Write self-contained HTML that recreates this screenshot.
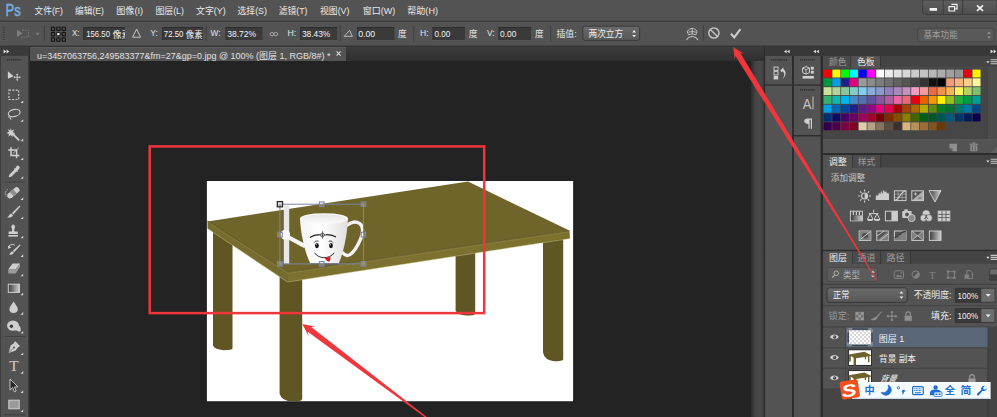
<!DOCTYPE html>
<html lang="zh-CN"><head><meta charset="utf-8"><title>Photoshop</title>
<style>html,body{margin:0;padding:0;background:#535353;overflow:hidden}svg{display:block}text{font-family:"Liberation Sans","Noto Sans CJK SC",sans-serif;white-space:pre}</style>
</head><body>
<svg width="997" height="417" viewBox="0 0 997 417">
<defs>
<linearGradient id="vs" x1="0" x2="1" y1="0" y2="0"><stop offset="0" stop-color="#2c2c2c"/><stop offset="0.35" stop-color="#444"/><stop offset="0.7" stop-color="#484848"/><stop offset="1" stop-color="#3c3c3c"/></linearGradient>
<linearGradient id="strip" x1="0" x2="0" y1="0" y2="1"><stop offset="0" stop-color="#3c3c3c"/><stop offset="1" stop-color="#2f2f2f"/></linearGradient>
<linearGradient id="btn" x1="0" x2="0" y1="0" y2="1"><stop offset="0" stop-color="#6a6a6a"/><stop offset="1" stop-color="#575757"/></linearGradient>
<linearGradient id="btn2" x1="0" x2="0" y1="0" y2="1"><stop offset="0" stop-color="#5e5e5e"/><stop offset="1" stop-color="#4e4e4e"/></linearGradient>
<linearGradient id="cup" x1="0" x2="1" y1="0" y2="0"><stop offset="0" stop-color="#f4f4f4"/><stop offset="0.45" stop-color="#ffffff"/><stop offset="1" stop-color="#dedede"/></linearGradient>
<linearGradient id="cupin" x1="0" x2="0" y1="0" y2="1"><stop offset="0" stop-color="#e6e6e6"/><stop offset="1" stop-color="#fbfbfb"/></linearGradient>
<linearGradient id="ico" x1="0" x2="0" y1="0" y2="1"><stop offset="0" stop-color="#d6d6d6"/><stop offset="1" stop-color="#a8a8a8"/></linearGradient>
<linearGradient id="gr" x1="0" x2="1" y1="0" y2="0"><stop offset="0" stop-color="#3a3a3a"/><stop offset="1" stop-color="#d0d0d0"/></linearGradient>
<pattern id="chk" width="4" height="4" patternUnits="userSpaceOnUse"><rect width="4" height="4" fill="#fff"/><rect width="2" height="2" fill="#d6d6d6"/><rect x="2" y="2" width="2" height="2" fill="#d6d6d6"/></pattern>
<clipPath id="cx"><rect x="83" y="27" width="42" height="13"/></clipPath>
<clipPath id="cwhite"><rect x="206.9" y="181" width="366.3" height="220.3"/></clipPath>
<clipPath id="crow3"><rect x="823" y="368" width="165" height="21"/></clipPath>
</defs>
<rect x="0.00" y="0.00" width="997.00" height="417.00" fill="#535353" />
<rect x="0.00" y="0.00" width="997.00" height="21.00" fill="#535353" />
<rect x="0.00" y="20.60" width="997.00" height="1.40" fill="#3b3b3b" />
<rect x="0.00" y="22.00" width="997.00" height="0.80" fill="#5c5c5c" />
<rect x="0.00" y="45.60" width="997.00" height="1.40" fill="#353535" />
<rect x="28.40" y="47.00" width="736.60" height="370.00" fill="#2b2b2b" />
<rect x="30.00" y="47.00" width="734.00" height="14.00" fill="url(#strip)" />
<rect x="30.00" y="61.00" width="721.00" height="356.00" fill="#232323" />
<rect x="751.00" y="61.00" width="13.00" height="356.00" fill="url(#vs)" />
<rect x="764.00" y="47.00" width="1.20" height="370.00" fill="#2a2a2a" />
<rect x="30.00" y="47.00" width="316.00" height="14.00" fill="#535353" />
<rect x="30.00" y="47.00" width="316.00" height="0.80" fill="#606060" />
<text x="36.90" y="58.90" font-size="9.4" fill="#e2e2e2" textLength="293.50" lengthAdjust="spacingAndGlyphs" >u=3457063756,249583377&amp;fm=27&amp;gp=0.jpg @ 100% (图层 1, RGB/8#) *</text>
<path d="M336.6 51.4l4 4.2M340.6 51.4l-4 4.2" stroke="#d8d8d8" stroke-width="1.1" fill="none"/>
<rect x="0.00" y="47.00" width="28.00" height="370.00" fill="#535353" />
<rect x="0.00" y="47.00" width="28.00" height="8.80" fill="#3a3a3a" />
<rect x="0.00" y="47.00" width="1.00" height="370.00" fill="#3e3e3e" />
<path d="M3.6 49.6l2.6 2-2.6 2zM6.6 49.6l2.6 2-2.6 2z" fill="#e6e6e6"/>
<rect x="7.0" y="58.9" width="1.1" height="1.7" fill="#303030"/><rect x="8.9" y="58.9" width="1.1" height="1.7" fill="#303030"/><rect x="10.8" y="58.9" width="1.1" height="1.7" fill="#303030"/><rect x="12.7" y="58.9" width="1.1" height="1.7" fill="#303030"/><rect x="14.6" y="58.9" width="1.1" height="1.7" fill="#303030"/><rect x="16.5" y="58.9" width="1.1" height="1.7" fill="#303030"/><rect x="18.4" y="58.9" width="1.1" height="1.7" fill="#303030"/><rect x="20.3" y="58.9" width="1.1" height="1.7" fill="#303030"/>
<rect x="765.20" y="47.00" width="231.80" height="8.80" fill="#383838" />
<rect x="765.20" y="55.80" width="231.80" height="361.20" fill="#2d2d2d" />
<path d="M786.6 49.7l-2.6 1.8 2.6 1.8zM789.6 49.7l-2.6 1.8 2.6 1.8z" fill="#e0e0e0"/>
<path d="M815.9 49.7l-2.6 1.8 2.6 1.8zM818.9 49.7l-2.6 1.8 2.6 1.8z" fill="#e0e0e0"/>
<path d="M990.6 49.6l2.6 2-2.6 2zM993.6 49.6l2.6 2-2.6 2z" fill="#e0e0e0"/>
<rect x="765.20" y="56.00" width="26.80" height="28.40" fill="#535353" />
<rect x="765.20" y="85.70" width="26.80" height="331.30" fill="#535353" />
<rect x="770.8" y="59" width="1.1" height="1.7" fill="#303030"/><rect x="772.7" y="59" width="1.1" height="1.7" fill="#303030"/><rect x="774.6" y="59" width="1.1" height="1.7" fill="#303030"/><rect x="776.5" y="59" width="1.1" height="1.7" fill="#303030"/><rect x="778.4" y="59" width="1.1" height="1.7" fill="#303030"/><rect x="780.3" y="59" width="1.1" height="1.7" fill="#303030"/><rect x="782.2" y="59" width="1.1" height="1.7" fill="#303030"/><rect x="784.1" y="59" width="1.1" height="1.7" fill="#303030"/><rect x="786.0" y="59" width="1.1" height="1.7" fill="#303030"/>
<rect x="794.00" y="56.00" width="26.60" height="28.40" fill="#535353" />
<rect x="794.00" y="85.70" width="26.60" height="49.30" fill="#535353" />
<rect x="794.00" y="136.40" width="26.60" height="280.60" fill="#535353" />
<rect x="800.2" y="59" width="1.1" height="1.7" fill="#303030"/><rect x="802.1" y="59" width="1.1" height="1.7" fill="#303030"/><rect x="804.0" y="59" width="1.1" height="1.7" fill="#303030"/><rect x="805.9" y="59" width="1.1" height="1.7" fill="#303030"/><rect x="807.8" y="59" width="1.1" height="1.7" fill="#303030"/><rect x="809.7" y="59" width="1.1" height="1.7" fill="#303030"/><rect x="811.6" y="59" width="1.1" height="1.7" fill="#303030"/><rect x="813.5" y="59" width="1.1" height="1.7" fill="#303030"/><rect x="800.2" y="89" width="1.1" height="1.7" fill="#303030"/><rect x="802.1" y="89" width="1.1" height="1.7" fill="#303030"/><rect x="804.0" y="89" width="1.1" height="1.7" fill="#303030"/><rect x="805.9" y="89" width="1.1" height="1.7" fill="#303030"/><rect x="807.8" y="89" width="1.1" height="1.7" fill="#303030"/><rect x="809.7" y="89" width="1.1" height="1.7" fill="#303030"/><rect x="811.6" y="89" width="1.1" height="1.7" fill="#303030"/><rect x="813.5" y="89" width="1.1" height="1.7" fill="#303030"/>
<g fill="#d0d0d0"><rect x="774" y="67" width="4" height="3.4" fill="none" stroke="#d0d0d0" stroke-width="0.9"/><rect x="774" y="71.6" width="4" height="3.4" fill="none" stroke="#d0d0d0" stroke-width="0.9"/><rect x="773.6" y="76" width="4.6" height="3.4"/><path d="M780.2 70.6l3-3 0.4 1.6c2.6 1.4 3 6.6-1 9.6 2.4-3.2 2-6.4-0.2-7.6l-0.4 1.2z"/></g>
<g fill="#d0d0d0"><path d="M806 66.6l3.4 1.4v4.6l-3.4 1.6-3.4-1.6v-4.6z" fill="none" stroke="#d0d0d0" stroke-width="1"/><path d="M802.8 68.2l3.2 1.4 3.2-1.4M806 69.6v4.4" fill="none" stroke="#d0d0d0" stroke-width="0.8"/><rect x="810.8" y="66.8" width="3" height="2.8"/><rect x="810.8" y="70.8" width="3" height="2.8"/><rect x="802.6" y="76" width="11.2" height="2.6"/></g>
<text x="802.80" y="108.70" font-size="14.6" fill="#c4c4c4" textLength="8.60" lengthAdjust="spacingAndGlyphs" >A</text>
<path d="M813 96.400v13" stroke="#c4c4c4" stroke-width="1"/>
<path d="M807.6 118.6h4.4v10.2h-1.2v-9h-1.2v9h-1.2v-4.8c-5.4 0-5.4-5.4-0.8-5.4z" fill="#cfcfcf"/>
<rect x="823.00" y="56.00" width="174.00" height="361.00" fill="#535353" />
<rect x="823.00" y="56.00" width="174.00" height="11.40" fill="#444444" />
<rect x="823.00" y="56.00" width="28.00" height="11.40" fill="#4b4b4b" />
<rect x="850.40" y="56.00" width="0.80" height="11.40" fill="#333" />
<rect x="851.20" y="56.00" width="28.80" height="12.00" fill="#535353" />
<rect x="880.00" y="56.00" width="0.80" height="11.40" fill="#333" />
<text x="829.00" y="65.30" font-size="8.9" fill="#9b9b9b" textLength="17.40" lengthAdjust="spacingAndGlyphs" >颜色</text>
<text x="856.90" y="65.30" font-size="8.9" fill="#ececec" textLength="17.80" lengthAdjust="spacingAndGlyphs" >色板</text>
<rect x="823.00" y="68.00" width="164.00" height="71.40" fill="#464646" />
<rect x="987.00" y="68.00" width="10.00" height="71.40" fill="#4c4c4c" />
<rect x="986.60" y="68.00" width="0.80" height="71.40" fill="#3e3e3e" />
<path d="M986.2 61.2h3.4l-1.7 2z" fill="#e0e0e0"/><path d="M990.6 59.800000000000004h6.4M990.6 61.800000000000004h6.4M990.6 63.800000000000004h6.4" stroke="#c8c8c8" stroke-width="1.1"/>
<rect x="823.60" y="69.60" width="8.00" height="7.90" fill="#ff0000" />
<rect x="832.36" y="69.60" width="8.00" height="7.90" fill="#ffff00" />
<rect x="841.12" y="69.60" width="8.00" height="7.90" fill="#00ff00" />
<rect x="849.88" y="69.60" width="8.00" height="7.90" fill="#00ffff" />
<rect x="858.64" y="69.60" width="8.00" height="7.90" fill="#0000ff" />
<rect x="867.40" y="69.60" width="8.00" height="7.90" fill="#ff00ff" />
<rect x="876.16" y="69.60" width="8.00" height="7.90" fill="#ffffff" />
<rect x="884.92" y="69.60" width="8.00" height="7.90" fill="#ebebeb" />
<rect x="893.68" y="69.60" width="8.00" height="7.90" fill="#e1e1e1" />
<rect x="902.44" y="69.60" width="8.00" height="7.90" fill="#d7d7d7" />
<rect x="911.20" y="69.60" width="8.00" height="7.90" fill="#cccccc" />
<rect x="919.96" y="69.60" width="8.00" height="7.90" fill="#c2c2c2" />
<rect x="928.72" y="69.60" width="8.00" height="7.90" fill="#b7b7b7" />
<rect x="937.48" y="69.60" width="8.00" height="7.90" fill="#acacac" />
<rect x="946.24" y="69.60" width="8.00" height="7.90" fill="#a1a1a1" />
<rect x="955.00" y="69.60" width="8.00" height="7.90" fill="#959595" />
<rect x="963.76" y="69.60" width="8.00" height="7.90" fill="#e60012" />
<rect x="972.52" y="69.60" width="8.00" height="7.90" fill="#fff100" />
<rect x="823.60" y="78.39" width="8.00" height="7.90" fill="#009944" />
<rect x="832.36" y="78.39" width="8.00" height="7.90" fill="#00a0e9" />
<rect x="841.12" y="78.39" width="8.00" height="7.90" fill="#1d2088" />
<rect x="849.88" y="78.39" width="8.00" height="7.90" fill="#e4007f" />
<rect x="858.64" y="78.39" width="8.00" height="7.90" fill="#9a9a9a" />
<rect x="867.40" y="78.39" width="8.00" height="7.90" fill="#8b8b8b" />
<rect x="876.16" y="78.39" width="8.00" height="7.90" fill="#7d7d7d" />
<rect x="884.92" y="78.39" width="8.00" height="7.90" fill="#707070" />
<rect x="893.68" y="78.39" width="8.00" height="7.90" fill="#626262" />
<rect x="902.44" y="78.39" width="8.00" height="7.90" fill="#555555" />
<rect x="911.20" y="78.39" width="8.00" height="7.90" fill="#464646" />
<rect x="919.96" y="78.39" width="8.00" height="7.90" fill="#343434" />
<rect x="928.72" y="78.39" width="8.00" height="7.90" fill="#111111" />
<rect x="937.48" y="78.39" width="8.00" height="7.90" fill="#000000" />
<rect x="946.24" y="78.39" width="8.00" height="7.90" fill="#f29b76" />
<rect x="955.00" y="78.39" width="8.00" height="7.90" fill="#f6b37f" />
<rect x="963.76" y="78.39" width="8.00" height="7.90" fill="#facd89" />
<rect x="972.52" y="78.39" width="8.00" height="7.90" fill="#fff799" />
<rect x="823.60" y="87.18" width="8.00" height="7.90" fill="#cce198" />
<rect x="832.36" y="87.18" width="8.00" height="7.90" fill="#acd598" />
<rect x="841.12" y="87.18" width="8.00" height="7.90" fill="#89c997" />
<rect x="849.88" y="87.18" width="8.00" height="7.90" fill="#84ccc9" />
<rect x="858.64" y="87.18" width="8.00" height="7.90" fill="#7ecef4" />
<rect x="867.40" y="87.18" width="8.00" height="7.90" fill="#88abda" />
<rect x="876.16" y="87.18" width="8.00" height="7.90" fill="#8c97cb" />
<rect x="884.92" y="87.18" width="8.00" height="7.90" fill="#8f82bc" />
<rect x="893.68" y="87.18" width="8.00" height="7.90" fill="#aa89bd" />
<rect x="902.44" y="87.18" width="8.00" height="7.90" fill="#c490bf" />
<rect x="911.20" y="87.18" width="8.00" height="7.90" fill="#f19ec2" />
<rect x="919.96" y="87.18" width="8.00" height="7.90" fill="#f29c9f" />
<rect x="928.72" y="87.18" width="8.00" height="7.90" fill="#ec6941" />
<rect x="937.48" y="87.18" width="8.00" height="7.90" fill="#f19149" />
<rect x="946.24" y="87.18" width="8.00" height="7.90" fill="#f8b551" />
<rect x="955.00" y="87.18" width="8.00" height="7.90" fill="#fff45c" />
<rect x="963.76" y="87.18" width="8.00" height="7.90" fill="#b3d465" />
<rect x="972.52" y="87.18" width="8.00" height="7.90" fill="#80c269" />
<rect x="823.60" y="95.97" width="8.00" height="7.90" fill="#32b16c" />
<rect x="832.36" y="95.97" width="8.00" height="7.90" fill="#13b5b1" />
<rect x="841.12" y="95.97" width="8.00" height="7.90" fill="#00b7ee" />
<rect x="849.88" y="95.97" width="8.00" height="7.90" fill="#448aca" />
<rect x="858.64" y="95.97" width="8.00" height="7.90" fill="#556fb5" />
<rect x="867.40" y="95.97" width="8.00" height="7.90" fill="#5f52a0" />
<rect x="876.16" y="95.97" width="8.00" height="7.90" fill="#8957a1" />
<rect x="884.92" y="95.97" width="8.00" height="7.90" fill="#ae5da1" />
<rect x="893.68" y="95.97" width="8.00" height="7.90" fill="#ea68a2" />
<rect x="902.44" y="95.97" width="8.00" height="7.90" fill="#eb6877" />
<rect x="911.20" y="95.97" width="8.00" height="7.90" fill="#e60012" />
<rect x="919.96" y="95.97" width="8.00" height="7.90" fill="#eb6100" />
<rect x="928.72" y="95.97" width="8.00" height="7.90" fill="#f39800" />
<rect x="937.48" y="95.97" width="8.00" height="7.90" fill="#fff100" />
<rect x="946.24" y="95.97" width="8.00" height="7.90" fill="#8fc31f" />
<rect x="955.00" y="95.97" width="8.00" height="7.90" fill="#22ac38" />
<rect x="963.76" y="95.97" width="8.00" height="7.90" fill="#009944" />
<rect x="972.52" y="95.97" width="8.00" height="7.90" fill="#009e96" />
<rect x="823.60" y="104.76" width="8.00" height="7.90" fill="#00a0e9" />
<rect x="832.36" y="104.76" width="8.00" height="7.90" fill="#0068b7" />
<rect x="841.12" y="104.76" width="8.00" height="7.90" fill="#00479d" />
<rect x="849.88" y="104.76" width="8.00" height="7.90" fill="#1d2088" />
<rect x="858.64" y="104.76" width="8.00" height="7.90" fill="#601986" />
<rect x="867.40" y="104.76" width="8.00" height="7.90" fill="#920783" />
<rect x="876.16" y="104.76" width="8.00" height="7.90" fill="#e4007f" />
<rect x="884.92" y="104.76" width="8.00" height="7.90" fill="#e5004f" />
<rect x="893.68" y="104.76" width="8.00" height="7.90" fill="#a40000" />
<rect x="902.44" y="104.76" width="8.00" height="7.90" fill="#a84200" />
<rect x="911.20" y="104.76" width="8.00" height="7.90" fill="#ac6a00" />
<rect x="919.96" y="104.76" width="8.00" height="7.90" fill="#b7aa00" />
<rect x="928.72" y="104.76" width="8.00" height="7.90" fill="#638c0b" />
<rect x="937.48" y="104.76" width="8.00" height="7.90" fill="#097c25" />
<rect x="946.24" y="104.76" width="8.00" height="7.90" fill="#007130" />
<rect x="955.00" y="104.76" width="8.00" height="7.90" fill="#00736d" />
<rect x="963.76" y="104.76" width="8.00" height="7.90" fill="#0075a9" />
<rect x="972.52" y="104.76" width="8.00" height="7.90" fill="#004986" />
<rect x="823.60" y="113.55" width="8.00" height="7.90" fill="#002e73" />
<rect x="832.36" y="113.55" width="8.00" height="7.90" fill="#100964" />
<rect x="841.12" y="113.55" width="8.00" height="7.90" fill="#440062" />
<rect x="849.88" y="113.55" width="8.00" height="7.90" fill="#6a005f" />
<rect x="858.64" y="113.55" width="8.00" height="7.90" fill="#a4005b" />
<rect x="867.40" y="113.55" width="8.00" height="7.90" fill="#a4002d" />
<rect x="876.16" y="113.55" width="8.00" height="7.90" fill="#7d0000" />
<rect x="884.92" y="113.55" width="8.00" height="7.90" fill="#7f2d00" />
<rect x="893.68" y="113.55" width="8.00" height="7.90" fill="#834e00" />
<rect x="902.44" y="113.55" width="8.00" height="7.90" fill="#8a8000" />
<rect x="911.20" y="113.55" width="8.00" height="7.90" fill="#3f6600" />
<rect x="919.96" y="113.55" width="8.00" height="7.90" fill="#005e15" />
<rect x="928.72" y="113.55" width="8.00" height="7.90" fill="#005826" />
<rect x="937.48" y="113.55" width="8.00" height="7.90" fill="#005752" />
<rect x="946.24" y="113.55" width="8.00" height="7.90" fill="#00597c" />
<rect x="955.00" y="113.55" width="8.00" height="7.90" fill="#003567" />
<rect x="963.76" y="113.55" width="8.00" height="7.90" fill="#001c58" />
<rect x="972.52" y="113.55" width="8.00" height="7.90" fill="#0b004e" />
<rect x="823.60" y="122.34" width="8.00" height="7.90" fill="#32004b" />
<rect x="832.36" y="122.34" width="8.00" height="7.90" fill="#50004a" />
<rect x="841.12" y="122.34" width="8.00" height="7.90" fill="#800046" />
<rect x="849.88" y="122.34" width="8.00" height="7.90" fill="#80001f" />
<rect x="858.64" y="122.34" width="8.00" height="7.90" fill="#e0cdae" />
<rect x="867.40" y="122.34" width="8.00" height="7.90" fill="#b5a18a" />
<rect x="876.16" y="122.34" width="8.00" height="7.90" fill="#86725f" />
<rect x="884.92" y="122.34" width="8.00" height="7.90" fill="#5e4d41" />
<rect x="893.68" y="122.34" width="8.00" height="7.90" fill="#3a302d" />
<rect x="902.44" y="122.34" width="8.00" height="7.90" fill="#d9b27c" />
<rect x="911.20" y="122.34" width="8.00" height="7.90" fill="#b98f5c" />
<rect x="919.96" y="122.34" width="8.00" height="7.90" fill="#9c6c38" />
<rect x="928.72" y="122.34" width="8.00" height="7.90" fill="#845320" />
<rect x="937.48" y="122.34" width="8.00" height="7.90" fill="#6a3a0a" />
<rect x="823.00" y="139.40" width="174.00" height="0.80" fill="#5e5e5e" />
<rect x="823.00" y="153.00" width="174.00" height="2.00" fill="#2d2d2d" />
<path d="M949.4 143.8h7.6v7.4h-4.4l-3.2-3.2z" fill="#8e8e8e"/><path d="M949.4 148l3.2 3.2v-3.2z" fill="#6a6a6a"/>
<g fill="#8a8a8a"><rect x="970.2" y="145.2" width="7.2" height="6" rx="0.8"/><rect x="969.4" y="143.6" width="8.8" height="1.2"/><rect x="972.4" y="142.4" width="2.8" height="1.2"/></g><path d="M972.4 146.4v4M975.2 146.4v4" stroke="#535353" stroke-width="0.8"/>
<path d="M997 146.6l-6.4 6.4h6.4z" fill="#626262"/>
<rect x="823.00" y="155.00" width="174.00" height="12.40" fill="#444444" />
<rect x="823.00" y="155.00" width="29.00" height="13.00" fill="#535353" />
<rect x="852.00" y="155.00" width="0.80" height="12.40" fill="#333" />
<rect x="852.80" y="155.00" width="27.60" height="12.40" fill="#4b4b4b" />
<rect x="880.40" y="155.00" width="0.80" height="12.40" fill="#333" />
<text x="828.80" y="164.90" font-size="8.9" fill="#ececec" textLength="18.00" lengthAdjust="spacingAndGlyphs" >调整</text>
<text x="857.70" y="164.90" font-size="8.9" fill="#9b9b9b" textLength="17.40" lengthAdjust="spacingAndGlyphs" >样式</text>
<path d="M986.2 160.6h3.4l-1.7 2z" fill="#e0e0e0"/><path d="M990.6 159.2h6.4M990.6 161.2h6.4M990.6 163.2h6.4" stroke="#c8c8c8" stroke-width="1.1"/>
<text x="830.80" y="181.20" font-size="8.6" fill="#c4c4c4" textLength="34.40" lengthAdjust="spacingAndGlyphs" >添加调整</text>
<rect x="823.00" y="249.80" width="174.00" height="1.60" fill="#2d2d2d" />
<circle cx="864.6" cy="196" r="3" fill="none" stroke="#cdcdcd" stroke-width="1.1"/><path d="M864.6 193a3 3 0 0 1 0 6z" fill="#cdcdcd"/>
<path d="M869.00 196.00L871.00 196.00M867.71 199.11L869.13 200.53M864.60 200.40L864.60 202.40M861.49 199.11L860.07 200.53M860.20 196.00L858.20 196.00M861.49 192.89L860.07 191.47M864.60 191.60L864.60 189.60M867.71 192.89L869.13 191.47" stroke="#cdcdcd" stroke-width="1.1"/>
<path d="M875.8 200v-4l1.2-1 1 1 1-3.4 1.2 2 1-4 1.2 3.4 1.2-4.4 1.2 3 1.2-1.6 1 2.6 1.2-1.2 0.8 2v5.6z" fill="#cdcdcd"/>
<rect x="894.4" y="190.8" width="11.6" height="9.8" fill="none" stroke="#cdcdcd" stroke-width="1"/>
<path d="M894.4 194h11.6M894.4 197.4h11.6M898.2 190.8v9.8M902.2 190.8v9.8" stroke="#cdcdcd" stroke-width="0.5"/><path d="M894.6 200.4c5 0 5.6-9.4 11.2-9.4" stroke="#cdcdcd" stroke-width="1.1" fill="none"/>
<rect x="911.8" y="190.8" width="11.6" height="9.8" fill="none" stroke="#cdcdcd" stroke-width="1"/>
<path d="M923.4 190.8l-11.6 9.8h11.6z" fill="#cdcdcd" opacity="0.75"/><path d="M914 194h3M915.5 192.5v3" stroke="#cdcdcd" stroke-width="0.9"/><path d="M918.4 198h3" stroke="#535353" stroke-width="0.9"/>
<path d="M929 190.6h12l-6 11.4z" fill="url(#gr)" stroke="#cdcdcd" stroke-width="1"/>
<rect x="850.4" y="211.2" width="12" height="9.6" fill="none" stroke="#cdcdcd" stroke-width="1"/>
<rect x="850.9" y="215.4" width="11" height="5" fill="url(#gr)"/><path d="M853.4 211.4v3.6M856.4 211.4v3.6M859.4 211.4v3.6" stroke="#cdcdcd" stroke-width="1.2"/>
<g stroke="#cdcdcd" fill="none" stroke-width="1"><path d="M873.6 209.8v3M868.8 213.6h9.6M870.2 213.6l-2.6 5.4M870.2 213.6l2.6 5.4M877 213.6l-2.6 5.4M877 213.6l2.6 5.4"/></g><path d="M867 219h6.4a3.2 2 0 0 1-6.4 0zM873.8 219h6.4a3.2 2 0 0 1-6.4 0z" fill="#cdcdcd"/>
<rect x="885.4" y="211.2" width="12" height="9.6" fill="none" stroke="#cdcdcd" stroke-width="1"/>
<rect x="891.4" y="211.2" width="6" height="9.6" fill="#cdcdcd"/>
<g fill="#cdcdcd"><rect x="902.2" y="211" width="9.4" height="7" rx="1"/><rect x="904.4" y="209.4" width="3.4" height="2"/></g><circle cx="907" cy="214.4" r="2" fill="#535353"/><circle cx="911.6" cy="218" r="3.6" fill="#8a8a8a" stroke="#cdcdcd" stroke-width="0.9"/>
<circle cx="926.2" cy="213.8" r="3.6" fill="#cdcdcd"/><circle cx="923.6" cy="218" r="3.4" fill="#cdcdcd" stroke="#535353" stroke-width="0.6"/><circle cx="928.9" cy="218" r="3.4" fill="#cdcdcd" stroke="#535353" stroke-width="0.6"/><path d="M926.2 217.2l0 -2.6M926.2 217.2l-2 1.6M926.2 217.2l2 1.6" stroke="#535353" stroke-width="1"/>
<rect x="938.2" y="211.2" width="11.6" height="9.6" fill="#cdcdcd" stroke="#cdcdcd" stroke-width="1"/>
<path d="M938.2 214.4h11.6M938.2 217.6h11.6M942 211.2v9.6M946 211.2v9.6" stroke="#535353" stroke-width="0.8"/>
<rect x="859.2" y="231" width="11.6" height="9.4" fill="none" stroke="#cdcdcd" stroke-width="1"/>
<rect x="859.7" y="231.5" width="10.6" height="8.4" fill="#808080"/><ellipse cx="865" cy="235.7" rx="3" ry="2.6" fill="#4a4a4a"/><path d="M860.4 239.4l9.4-7.4" stroke="#cdcdcd" stroke-width="1"/>
<rect x="876.8" y="231" width="11.6" height="9.4" fill="none" stroke="#cdcdcd" stroke-width="1"/>
<path d="M876.8 240.4l11.6-9.4v9.4z" fill="#808080"/><path d="M877 236l7-5M880 240.4l8.4-6.6" stroke="#cdcdcd" stroke-width="0.9"/>
<rect x="894.4" y="231" width="11.6" height="9.4" fill="none" stroke="#cdcdcd" stroke-width="1"/>
<path d="M894.4 238l3-1v-2l3-0.8v-1.6l3-1 2.6-0.6v9.4h-11.6z" fill="#808080"/><path d="M894.6 237.6l3-1 0.6-1.6 2.6-0.8 0.4-1.6 3-1 1.6-0.4" stroke="#3a3a3a" stroke-width="1.2" fill="none"/>
<rect x="911.8" y="231" width="11.6" height="9.4" fill="none" stroke="#cdcdcd" stroke-width="1"/>
<path d="M911.8 231l5.8 4.7-5.8 4.7zM923.4 231l-5.8 4.7 5.8 4.7z" fill="#808080"/><path d="M911.8 231l11.6 9.4M923.4 231l-11.6 9.4" stroke="#cdcdcd" stroke-width="0.7"/>
<rect x="929.4" y="231" width="11.6" height="9.4" fill="url(#gr)" stroke="#cdcdcd" stroke-width="1"/>
<rect x="823.00" y="251.40" width="174.00" height="12.40" fill="#444444" />
<rect x="823.00" y="251.40" width="29.00" height="13.00" fill="#535353" />
<rect x="852.00" y="251.40" width="0.80" height="12.40" fill="#333" />
<rect x="852.80" y="251.40" width="27.40" height="12.40" fill="#4b4b4b" />
<rect x="880.20" y="251.40" width="0.80" height="12.40" fill="#333" />
<rect x="881.00" y="251.40" width="29.00" height="12.40" fill="#4b4b4b" />
<rect x="910.00" y="251.40" width="0.80" height="12.40" fill="#333" />
<text x="829.00" y="261.20" font-size="8.9" fill="#ececec" textLength="18.00" lengthAdjust="spacingAndGlyphs" >图层</text>
<text x="857.50" y="261.20" font-size="8.9" fill="#9b9b9b" textLength="17.80" lengthAdjust="spacingAndGlyphs" >通道</text>
<text x="886.50" y="261.20" font-size="8.9" fill="#9b9b9b" textLength="18.20" lengthAdjust="spacingAndGlyphs" >路径</text>
<path d="M986.2 256.8h3.4l-1.7 2z" fill="#e0e0e0"/><path d="M990.6 255.4h6.4M990.6 257.40000000000003h6.4M990.6 259.40000000000003h6.4" stroke="#c8c8c8" stroke-width="1.1"/>
<rect x="827" y="267.4" width="50.6" height="14" rx="2.4" fill="#5b5b5b" stroke="#474747" stroke-width="0.9"/>
<circle cx="836.2" cy="273.2" r="2.3" fill="none" stroke="#b0b0b0" stroke-width="1"/><path d="M834.6 275l-2.4 2.6" stroke="#b0b0b0" stroke-width="1.1"/>
<text x="843.00" y="277.60" font-size="8.8" fill="#b4b4b4" textLength="16.80" lengthAdjust="spacingAndGlyphs" >类型</text>
<path d="M871 272.8l1.9-2.2 1.9 2.2zM871 275.4l1.9 2.2 1.9-2.2z" fill="#cfcfcf"/>
<rect x="894.2" y="270.8" width="9.2" height="7.6" rx="0.8" fill="none" stroke="#828282" stroke-width="1"/><path d="M895.6 277l2.2-2.6 1.6 1.6 1.2-1 1.6 2z" fill="#828282"/><circle cx="901.2" cy="272.8" r="0.8" fill="#828282"/>
<circle cx="915.8" cy="274.6" r="3.7" fill="none" stroke="#828282" stroke-width="1"/><path d="M913.2 277.2a3.7 3.7 0 0 0 5.2-5.2z" fill="#828282"/>
<text x="929.20" y="278.60" font-size="10.5" fill="#828282" style='font-family:"Liberation Serif",serif' >T</text>
<rect x="948" y="271.6" width="6.4" height="6.2" fill="none" stroke="#828282" stroke-width="1"/><g fill="#828282"><rect x="946.8" y="270.4" width="2.2" height="2.2"/><rect x="953.4" y="270.4" width="2.2" height="2.2"/><rect x="946.8" y="276.8" width="2.2" height="2.2"/><rect x="953.4" y="276.8" width="2.2" height="2.2"/></g>
<path d="M966.8 270.6h3.4l2.2 2.2v5.8h-5.6z" fill="none" stroke="#828282" stroke-width="1"/><rect x="964.6" y="274.4" width="4.4" height="4.4" fill="#828282"/>
<rect x="989.6" y="268.8" width="7.4" height="11.8" rx="1" fill="#3f3f3f" stroke="#3a3a3a" stroke-width="0.6"/><rect x="990.2" y="269.4" width="6.8" height="5" fill="#6a6a6a"/>
<rect x="823.00" y="283.80" width="174.00" height="1.20" fill="#424242" />
<rect x="827" y="287.8" width="80.2" height="14.6" rx="2.4" fill="url(#btn)" stroke="#333" stroke-width="0.9"/>
<text x="833.00" y="298.20" font-size="8.8" fill="#f0f0f0" textLength="16.40" lengthAdjust="spacingAndGlyphs" >正常</text>
<path d="M899.4 293.6l2-2.4 2 2.4zM899.4 296.4l2 2.4 2-2.4z" fill="#e6e6e6"/>
<text x="913.80" y="298.30" font-size="8.7" fill="#ededed" textLength="37.60" lengthAdjust="spacingAndGlyphs" >不透明度:</text>
<rect x="955.20" y="288.20" width="26.20" height="14.00" fill="#3a3a3a" />
<rect x="981.40" y="288.20" width="13.60" height="14.00" fill="#6c6c6c" />
<rect x="955.20" y="288.20" width="39.80" height="14.00" fill="none" stroke="#333" stroke-width="0.8"/>
<text x="957.60" y="299.00" font-size="9" fill="#f0f0f0" textLength="20.60" lengthAdjust="spacingAndGlyphs" >100%</text>
<path d="M985.6 294l2.6 2.8 2.6-2.8z" fill="#ededed"/>
<rect x="823.00" y="305.20" width="174.00" height="1.00" fill="#444" />
<text x="828.50" y="318.60" font-size="8.7" fill="#9a9a9a" textLength="20.80" lengthAdjust="spacingAndGlyphs" >锁定:</text>
<rect x="855.8" y="312.2" width="7.8" height="7.8" fill="#6e6e6e" stroke="#8e8e8e" stroke-width="0.8"/><path d="M855.8 312.2h2.6v2.6h-2.6zM861 312.2h2.6v2.6h-2.6zM858.4 314.8h2.6v2.6h-2.6zM855.8 317.4h2.6v2.6h-2.6zM861 317.4h2.6v2.6h-2.6z" fill="#9a9a9a"/>
<path d="M881.8 311.6l-6.6 6.2 1 1zM875.6 317.4c-1.4 0-2.2 1.6-4.6 2 2 1.2 5.4 0.6 5.6-1z" fill="#8e8e8e" stroke="#8e8e8e" stroke-width="0.6"/>
<path d="M891.9 311.6v9.2M887.3 316.2h9.2" stroke="#8e8e8e" stroke-width="1"/><path d="M891.9 310.8l1.8 2h-3.6zM891.9 321.6l1.8-2h-3.6zM886.5 316.2l2-1.8v3.6zM897.3 316.2l-2-1.8v3.6z" fill="#8e8e8e"/>
<rect x="904.6" y="315.6" width="7.2" height="5.2" fill="#8e8e8e"/><path d="M906 315.6v-1.6a2.2 2.2 0 0 1 4.4 0v1.6" fill="none" stroke="#8e8e8e" stroke-width="1.2"/>
<text x="931.00" y="318.80" font-size="8.7" fill="#ededed" textLength="20.40" lengthAdjust="spacingAndGlyphs" >填充:</text>
<rect x="955.20" y="308.60" width="26.20" height="14.00" fill="#3a3a3a" />
<rect x="981.40" y="308.60" width="13.60" height="14.00" fill="#6c6c6c" />
<rect x="955.20" y="308.60" width="39.80" height="14.00" fill="none" stroke="#333" stroke-width="0.8"/>
<text x="957.60" y="319.40" font-size="9" fill="#f0f0f0" textLength="20.60" lengthAdjust="spacingAndGlyphs" >100%</text>
<path d="M985.6 314.4l2.6 2.8 2.6-2.8z" fill="#ededed"/>
<rect x="823.00" y="326.60" width="174.00" height="0.80" fill="#3d3d3d" />
<rect x="823.00" y="389.00" width="165.00" height="28.00" fill="#454545" />
<rect x="987.80" y="327.40" width="9.20" height="89.60" fill="#444" />
<rect x="987.40" y="327.40" width="0.80" height="89.60" fill="#393939" />
<rect x="845.60" y="327.40" width="142.00" height="20.00" fill="#596678" />
<rect x="823.00" y="347.40" width="164.60" height="0.90" fill="#414141" />
<rect x="823.00" y="367.80" width="164.60" height="0.90" fill="#414141" />
<rect x="823.00" y="388.60" width="164.60" height="0.90" fill="#414141" />
<rect x="845.00" y="327.40" width="0.80" height="61.60" fill="#444" />
<path d="M830 337c2.400-3.200 6.400-3.200 8.800 0-2.400 3-6.400 3-8.800 0z" fill="#d2d2d2"/><circle cx="834.600" cy="337" r="1.700" fill="#444"/><circle cx="834" cy="336.4" r="0.500" fill="#ddd"/>
<path d="M830 357.4c2.400-3.200 6.400-3.200 8.800 0-2.400 3-6.400 3-8.800 0z" fill="#d2d2d2"/><circle cx="834.600" cy="357.4" r="1.700" fill="#444"/><circle cx="834" cy="356.79999999999995" r="0.500" fill="#ddd"/>
<path d="M830 378c2.400-3.200 6.400-3.200 8.800 0-2.400 3-6.400 3-8.800 0z" fill="#d2d2d2"/><circle cx="834.600" cy="378" r="1.700" fill="#444"/><circle cx="834" cy="377.4" r="0.500" fill="#ddd"/>
<rect x="849.00" y="330.20" width="22.00" height="14.20" fill="url(#chk)" />
<path d="M848.2 332.6v-3.6h4M868 329h4v3.6M872 342v3.6h-4M852.2 345.6h-4v-3.6" fill="none" stroke="#f0f0f0" stroke-width="1"/>
<rect x="848.2" y="329" width="23.8" height="16.6" fill="none" stroke="#222" stroke-width="0.5"/>
<text x="878.70" y="341.50" font-size="9" fill="#f2f2f2" textLength="25.60" lengthAdjust="spacingAndGlyphs" >图层 1</text>
<rect x="848.4" y="349.8" width="23" height="15.6" fill="#fff" stroke="#1e1e1e" stroke-width="0.9"/>
<path d="M849 354.40000000000003l15.4-2.6 6.4 3.2v1l-1.4 0.2v6h-1.4v-5.8l-2 .3v2.6h-1.2v-2.4l-8.8 1.4v7h-2.4v-7.6l-2.8-1.8v5.6h-1.6z" fill="#6d622a"/>
<text x="879.00" y="361.90" font-size="9" fill="#f2f2f2" textLength="37.00" lengthAdjust="spacingAndGlyphs" >背景 副本</text>
<g clip-path="url(#crow3)">
<rect x="848.4" y="370.6" width="23" height="15.6" fill="#fff" stroke="#1e1e1e" stroke-width="0.9"/>
<path d="M849 375.20000000000005l15.4-2.6 6.4 3.2v1l-1.4 0.2v6h-1.4v-5.8l-2 .3v2.6h-1.2v-2.4l-8.8 1.4v7h-2.4v-7.6l-2.8-1.8v5.6h-1.6z" fill="#6d622a"/>
<text x="879.60" y="382.40" font-size="9" fill="#f2f2f2" textLength="16.40" lengthAdjust="spacingAndGlyphs" font-style="italic" transform="skewX(-12)" transform-origin="881 382">背景</text>
<rect x="968.4" y="378.4" width="7.2" height="5.2" fill="#9a9a9a"/><path d="M969.8 378.4v-1.6a2.2 2.2 0 0 1 4.4 0v1.6" fill="none" stroke="#9a9a9a" stroke-width="1.2"/>
</g>
<rect x="852" y="382" width="138.6" height="16.8" fill="#f6fbff"/><rect x="852" y="397.8" width="138.6" height="1" fill="#c8dcf0"/>
<g transform="rotate(-9 849.8 389.4)"><rect x="840.6" y="380.4" width="18.4" height="18" rx="2.2" fill="#f4511c"/></g>
<text x="841.40" y="396.20" font-size="17" fill="#ffffff" textLength="15.00" lengthAdjust="spacingAndGlyphs" font-weight="bold" font-style="italic" transform="rotate(-9 849.8 389.4)">S</text>
<text x="864.60" y="394.40" font-size="10.6" fill="#1b6fd1" textLength="10.20" lengthAdjust="spacingAndGlyphs" font-weight="bold" >中</text>
<path d="M888.200 385a5.400 5.400 0 1 1-7 7.600 5.800 5.800 0 0 0 7-7.600z" fill="#1b6fd1" stroke="#1b6fd1" stroke-width="0.800" stroke-linejoin="round"/>
<circle cx="898.4" cy="387.8" r="1.2" fill="none" stroke="#1b6fd1" stroke-width="0.9"/><path d="M902.4 390.6a1.3 1.3 0 1 1 1.6 1.6c0 1.2-0.8 2.2-2 2.6 0.6-0.8 0.8-1.4 0.6-2.2-0.8-0.2-1.2-1.2-0.2-2z" fill="#1b6fd1"/>
<rect x="912.6" y="386.6" width="10.6" height="8" rx="1" fill="none" stroke="#1b6fd1" stroke-width="1.2"/><path d="M914.4 388.8h7M914.4 390.6h7" stroke="#1b6fd1" stroke-width="1" stroke-dasharray="1 0.5"/><path d="M915 392.8h5.8" stroke="#1b6fd1" stroke-width="1.1"/>
<circle cx="935.6" cy="387.4" r="2.2" fill="#1b6fd1"/><path d="M930 393.6c0-3.4 2.4-4 5.6-4s5.6 0.6 5.6 4v1.6h-11.2z" fill="#1b6fd1"/><rect x="934" y="392" width="8" height="4.4" rx="0.6" fill="#f6fbff" stroke="#1b6fd1" stroke-width="0.8"/><path d="M935.4 393.4h2v1.6h-2zM938.6 393.4h2v1.6h-2z" fill="#1b6fd1"/>
<text x="944.80" y="394.40" font-size="10.6" fill="#1b6fd1" textLength="10.40" lengthAdjust="spacingAndGlyphs" font-weight="bold" >全</text>
<text x="960.60" y="394.40" font-size="10.6" fill="#1b6fd1" textLength="10.80" lengthAdjust="spacingAndGlyphs" font-weight="bold" >简</text>
<path d="M986.8 388.2a3 3 0 0 1-4.2 2.6l-3.8 4.4a1.1 1.1 0 0 1-1.7-1.4l4.2-4a3 3 0 0 1 3.6-4l-1.8 2 0.6 1.4 1.4 0.4z" fill="#1b6fd1"/>
<text x="5.500" y="15.700" font-size="15.600" fill="#79aee0" stroke="#79aee0" stroke-width="0.500" textLength="15.200" lengthAdjust="spacingAndGlyphs">Ps</text>
<text x="34.50" y="14.30" font-size="9.2" fill="#e9e9e9" textLength="28.50" lengthAdjust="spacingAndGlyphs" >文件(F)</text>
<text x="75.00" y="14.30" font-size="9.2" fill="#e9e9e9" textLength="29.00" lengthAdjust="spacingAndGlyphs" >编辑(E)</text>
<text x="116.20" y="14.30" font-size="9.2" fill="#e9e9e9" textLength="26.80" lengthAdjust="spacingAndGlyphs" >图像(I)</text>
<text x="155.40" y="14.30" font-size="9.2" fill="#e9e9e9" textLength="28.60" lengthAdjust="spacingAndGlyphs" >图层(L)</text>
<text x="196.00" y="14.30" font-size="9.2" fill="#e9e9e9" textLength="29.60" lengthAdjust="spacingAndGlyphs" >文字(Y)</text>
<text x="237.50" y="14.30" font-size="9.2" fill="#e9e9e9" textLength="29.40" lengthAdjust="spacingAndGlyphs" >选择(S)</text>
<text x="278.70" y="14.30" font-size="9.2" fill="#e9e9e9" textLength="28.80" lengthAdjust="spacingAndGlyphs" >滤镜(T)</text>
<text x="320.00" y="14.30" font-size="9.2" fill="#e9e9e9" textLength="29.40" lengthAdjust="spacingAndGlyphs" >视图(V)</text>
<text x="362.70" y="14.30" font-size="9.2" fill="#e9e9e9" textLength="32.50" lengthAdjust="spacingAndGlyphs" >窗口(W)</text>
<text x="407.20" y="14.30" font-size="9.2" fill="#e9e9e9" textLength="30.80" lengthAdjust="spacingAndGlyphs" >帮助(H)</text>
<path d="M922.6 0v11.4a3 3 0 0 0 3 3h71.4v-14.4z" fill="url(#btn2)" stroke="#3a3a3a" stroke-width="0.9"/>
<path d="M943.2 0v14.4M962.6 0v14.4" stroke="#3a3a3a" stroke-width="0.9"/>
<rect x="929.6" y="8" width="7.4" height="2.8" fill="#f2f2f2"/>
<path d="M951.4 4.4h5.6v4.4h-1.6M949 6.6h5.6v4.4h-5.6z" fill="none" stroke="#f2f2f2" stroke-width="1.2"/>
<path d="M977 5.4l6 5.4M983 5.4l-6 5.4" stroke="#f2f2f2" stroke-width="1.7" fill="none"/>
<path d="M3.8 27v13" stroke="#3c3c3c" stroke-width="1.8" stroke-dasharray="1.2 1.2"/>
<path d="M17 29.6l5.6 3.8-5.6 3.6z" fill="#7c7c7c"/><path d="M22 30.2h6.4v7h-9" fill="none" stroke="#7c7c7c" stroke-width="1" stroke-dasharray="1.6 1.2"/>
<path d="M35.4 32.8h4.4l-2.2 2.6z" fill="#7a7a7a"/>
<path d="M44.4 25.6v15.6" stroke="#3f3f3f" stroke-width="1"/>
<path d="M53 28.8h10.8v10.8h-10.8zM58.4 28.8v10.8M53 34.2h10.8" fill="none" stroke="#111" stroke-width="0.8" stroke-dasharray="0.8 0.8"/><rect x="51.4" y="27.2" width="3.2" height="3.2" fill="#535353" stroke="#111" stroke-width="1"/><rect x="51.4" y="32.6" width="3.2" height="3.2" fill="#535353" stroke="#111" stroke-width="1"/><rect x="51.4" y="38.0" width="3.2" height="3.2" fill="#535353" stroke="#111" stroke-width="1"/><rect x="56.8" y="27.2" width="3.2" height="3.2" fill="#535353" stroke="#111" stroke-width="1"/><rect x="56.8" y="32.6" width="3.2" height="3.2" fill="#fff" stroke="#111" stroke-width="0.9"/><rect x="56.8" y="38.0" width="3.2" height="3.2" fill="#535353" stroke="#111" stroke-width="1"/><rect x="62.2" y="27.2" width="3.2" height="3.2" fill="#535353" stroke="#111" stroke-width="1"/><rect x="62.2" y="32.6" width="3.2" height="3.2" fill="#535353" stroke="#111" stroke-width="1"/><rect x="62.2" y="38.0" width="3.2" height="3.2" fill="#535353" stroke="#111" stroke-width="1"/>
<text x="72.00" y="36.40" font-size="8.8" fill="#e4e4e4" textLength="7.60" lengthAdjust="spacingAndGlyphs" >X:</text>
<rect x="83.00" y="27.00" width="42.00" height="13.20" fill="#3a3a3a" />
<rect x="83.00" y="27.00" width="42.00" height="0.90" fill="#2c2c2c" />
<rect x="83.00" y="27.00" width="0.80" height="13.20" fill="#303030" />
<rect x="83.00" y="40.20" width="42.00" height="0.60" fill="#5d5d5d" />
<g clip-path="url(#cx)">
<text x="86.20" y="37.40" font-size="9.4" fill="#f2f2f2" textLength="23.80" lengthAdjust="spacingAndGlyphs" >156.50</text>
<text x="112.40" y="37.60" font-size="9.2" fill="#f2f2f2" textLength="18.20" lengthAdjust="spacingAndGlyphs" >像素</text>
</g>
<path d="M136.6 29l4 8.2h-8z" fill="none" stroke="#c6c6c6" stroke-width="1"/>
<text x="150.60" y="36.40" font-size="8.8" fill="#e4e4e4" textLength="7.00" lengthAdjust="spacingAndGlyphs" >Y:</text>
<rect x="162.00" y="27.00" width="41.20" height="13.20" fill="#3a3a3a" />
<rect x="162.00" y="27.00" width="41.20" height="0.90" fill="#2c2c2c" />
<rect x="162.00" y="27.00" width="0.80" height="13.20" fill="#303030" />
<rect x="162.00" y="40.20" width="41.20" height="0.60" fill="#5d5d5d" />
<text x="163.80" y="37.40" font-size="9.4" fill="#f2f2f2" textLength="19.60" lengthAdjust="spacingAndGlyphs" >72.50</text>
<text x="185.80" y="37.60" font-size="9.2" fill="#f2f2f2" textLength="16.80" lengthAdjust="spacingAndGlyphs" >像素</text>
<path d="M206.2 25.6v15.6" stroke="#3f3f3f" stroke-width="1"/>
<text x="210.60" y="36.40" font-size="8.8" fill="#e4e4e4" textLength="10.00" lengthAdjust="spacingAndGlyphs" >W:</text>
<rect x="225.60" y="27.00" width="37.00" height="13.20" fill="#3a3a3a" />
<rect x="225.60" y="27.00" width="37.00" height="0.90" fill="#2c2c2c" />
<rect x="225.60" y="27.00" width="0.80" height="13.20" fill="#303030" />
<rect x="225.60" y="40.20" width="37.00" height="0.60" fill="#5d5d5d" />
<text x="227.20" y="37.40" font-size="9.4" fill="#f2f2f2" textLength="29.00" lengthAdjust="spacingAndGlyphs" >38.72%</text>
<g fill="none" stroke="#a8a8a8" stroke-width="1"><ellipse cx="272" cy="34.100" rx="2" ry="1.600"/><ellipse cx="275.800" cy="34.100" rx="2" ry="1.600"/></g>
<text x="287.50" y="36.40" font-size="8.8" fill="#e4e4e4" textLength="8.60" lengthAdjust="spacingAndGlyphs" >H:</text>
<rect x="300.00" y="27.00" width="37.20" height="13.20" fill="#3a3a3a" />
<rect x="300.00" y="27.00" width="37.20" height="0.90" fill="#2c2c2c" />
<rect x="300.00" y="27.00" width="0.80" height="13.20" fill="#303030" />
<rect x="300.00" y="40.20" width="37.20" height="0.60" fill="#5d5d5d" />
<text x="301.90" y="37.40" font-size="9.4" fill="#f2f2f2" textLength="28.40" lengthAdjust="spacingAndGlyphs" >38.43%</text>
<path d="M340.2 25.6v15.6" stroke="#3f3f3f" stroke-width="1"/>
<path d="M349.600 30.400l-5.400 5.900h8.200z" fill="none" stroke="#c6c6c6" stroke-width="0.900"/>
<rect x="357.00" y="27.00" width="37.40" height="13.20" fill="#3a3a3a" />
<rect x="357.00" y="27.00" width="37.40" height="0.90" fill="#2c2c2c" />
<rect x="357.00" y="27.00" width="0.80" height="13.20" fill="#303030" />
<rect x="357.00" y="40.20" width="37.40" height="0.60" fill="#5d5d5d" />
<text x="358.20" y="37.40" font-size="9.4" fill="#f2f2f2" textLength="17.00" lengthAdjust="spacingAndGlyphs" >0.00</text>
<text x="398.00" y="37.00" font-size="9.2" fill="#e4e4e4" textLength="8.60" lengthAdjust="spacingAndGlyphs" >度</text>
<path d="M413.8 25.6v15.6" stroke="#3f3f3f" stroke-width="1"/>
<text x="420.00" y="36.40" font-size="8.8" fill="#e4e4e4" textLength="8.60" lengthAdjust="spacingAndGlyphs" >H:</text>
<rect x="432.60" y="27.00" width="32.40" height="13.20" fill="#3a3a3a" />
<rect x="432.60" y="27.00" width="32.40" height="0.90" fill="#2c2c2c" />
<rect x="432.60" y="27.00" width="0.80" height="13.20" fill="#303030" />
<rect x="432.60" y="40.20" width="32.40" height="0.60" fill="#5d5d5d" />
<text x="434.40" y="37.40" font-size="9.4" fill="#f2f2f2" textLength="15.80" lengthAdjust="spacingAndGlyphs" >0.00</text>
<text x="468.80" y="37.00" font-size="9.2" fill="#e4e4e4" textLength="8.80" lengthAdjust="spacingAndGlyphs" >度</text>
<text x="487.00" y="36.40" font-size="8.8" fill="#e4e4e4" textLength="7.60" lengthAdjust="spacingAndGlyphs" >V:</text>
<rect x="498.60" y="27.00" width="32.40" height="13.20" fill="#3a3a3a" />
<rect x="498.60" y="27.00" width="32.40" height="0.90" fill="#2c2c2c" />
<rect x="498.60" y="27.00" width="0.80" height="13.20" fill="#303030" />
<rect x="498.60" y="40.20" width="32.40" height="0.60" fill="#5d5d5d" />
<text x="500.00" y="37.40" font-size="9.4" fill="#f2f2f2" textLength="16.40" lengthAdjust="spacingAndGlyphs" >0.00</text>
<text x="535.00" y="37.00" font-size="9.2" fill="#e4e4e4" textLength="8.60" lengthAdjust="spacingAndGlyphs" >度</text>
<path d="M550.6 25.6v15.6" stroke="#3f3f3f" stroke-width="1"/>
<text x="556.40" y="37.00" font-size="9" fill="#e4e4e4" textLength="20.40" lengthAdjust="spacingAndGlyphs" >插值:</text>
<rect x="582.8" y="26.2" width="56.8" height="14.2" rx="2.2" fill="url(#btn)" stroke="#383838" stroke-width="0.9"/>
<text x="588.50" y="37.00" font-size="9" fill="#f0f0f0" textLength="34.60" lengthAdjust="spacingAndGlyphs" >两次立方</text>
<path d="M632.2 32.4l1.9-2.3 1.9 2.3zM632.2 35l1.9 2.3 1.9-2.3z" fill="#ececec"/>
<g fill="none" stroke="#c4c4c4" stroke-width="1"><path d="M687.4 31.2c2.6-3.6 7-3.6 9.6 0-0.2 1.6-0.6 2.6-1.2 3.6-2.4-1-4.8-1-7.2 0-0.6-1-1-2-1.2-3.6z"/><path d="M692.2 28.6v5.4M688.6 32.2c2.4-0.8 4.8-0.8 7.2 0"/><path d="M686.6 40c2.8-4.6 8.4-4.6 11.2 0" stroke-width="1.1"/></g>
<path d="M703.2 25.4v15.8" stroke="#3f3f3f" stroke-width="1"/>
<circle cx="713.9" cy="33" r="5.1" fill="none" stroke="#c2c2c2" stroke-width="1.5"/><path d="M710.4 29.4l7 7.2" stroke="#c2c2c2" stroke-width="1.5"/>
<path d="M730.2 34.4l1.6-1.4 2.4 2.8 5.4-7.2 1.6 1.2-6.8 9.2z" fill="#cfcfcf"/>
<rect x="917.8" y="28.2" width="76" height="13.6" rx="2.4" fill="#595959" stroke="#444" stroke-width="0.9"/>
<text x="923.50" y="38.40" font-size="9" fill="#9e9e9e" textLength="34.20" lengthAdjust="spacingAndGlyphs" >基本功能</text>
<path d="M987.2 33.8l1.8-2.2 1.8 2.2zM987.2 36.4l1.8 2.2 1.8-2.2z" fill="#9a9a9a"/>
<path d="M7.900 71.300l5.800 4.900-5.800 2.500z" fill="#cfcfcf"/><path d="M17.200 74.400v5.800M14.300 77.300h5.800" stroke="#cfcfcf" stroke-width="0.900"/><path d="M17.200 73.600l1.200 1.400h-2.400zM17.200 81l1.200-1.400h-2.400zM13.500 77.300l1.400-1.200v2.400zM20.900 77.300l-1.400-1.200v2.400z" fill="#cfcfcf"/>
<rect x="8.900" y="90.100" width="9.800" height="9.400" fill="none" stroke="#cfcfcf" stroke-width="1.1" stroke-dasharray="2 1.4"/>
<path d="M23.2 103v-2.6l-2.6 2.6z" fill="#d8d8d8"/>
<ellipse cx="14.200" cy="113" rx="6" ry="3.500" fill="none" stroke="#cfcfcf" stroke-width="1.100" transform="rotate(-14 14.200 113)"/><path d="M10 115.600c-1.800 0.400-1.800 2.400-0.200 2.400 1.400 0 1.400-1.600 0.200-1.400M10.400 118l0.600 1.800" fill="none" stroke="#cfcfcf" stroke-width="0.9"/>
<path d="M23.2 121.8v-2.6l-2.6 2.6z" fill="#d8d8d8"/>
<path d="M11.8 133l7.4 7.4" stroke="#cfcfcf" stroke-width="1.8"/><path d="M10.6 127.6l0.8 2.8 2.8-1-1.4 2.6 2.4 1.6-2.8 0.6 0.2 2.8-2-2-2.2 1.8 0.6-2.8-2.6-1 2.6-1.2-1-2.6 2.4 1.2z" fill="#cfcfcf"/>
<path d="M23.2 141.2v-2.6l-2.6 2.6z" fill="#d8d8d8"/>
<path d="M11 147.300v8.200h8.400M8.200 149.900h8.400v8.400" fill="none" stroke="#cfcfcf" stroke-width="1.5"/><path d="M19 147.500l-6.400 6.400" stroke="#cfcfcf" stroke-width="0.8"/>
<path d="M23.2 160v-2.6l-2.6 2.6z" fill="#d8d8d8"/>
<path d="M16.4 166.2a1.9 1.9 0 0 1 2.7 2.7l-1.6 1.6 0.6 0.6-1 1-0.6-0.6-5 5-2.2 0.8-0.6-0.6 0.8-2.2 5-5-0.6-0.6 1-1 0.6 0.6z" fill="#cfcfcf"/>
<path d="M23.2 178.8v-2.6l-2.6 2.6z" fill="#d8d8d8"/>
<path d="M3.600 182.200h21.400" stroke="#3c3c3c" stroke-width="1"/><path d="M3.600 183.100h21.400" stroke="#606060" stroke-width="0.6"/>
<g transform="rotate(-40 13.4 192.8)"><rect x="6.4" y="190" width="14" height="5.6" rx="2.6" fill="#cfcfcf"/><rect x="11.2" y="190" width="4.4" height="5.6" fill="#8e8e8e"/></g><path d="M7.6 189.4a4.6 4.6 0 0 0 1.8 8.4" fill="none" stroke="#cfcfcf" stroke-width="0.9" stroke-dasharray="1.4 1"/>
<path d="M23.2 199.9v-2.6l-2.6 2.6z" fill="#d8d8d8"/>
<path d="M19.6 205.6l0.8 0.8-7 8-1.4-1.4z" fill="#cfcfcf"/><path d="M11.4 213.6l1.6 1.6c-0.6 2.2-3.2 2.6-5.8 2.2 1.8-0.6 1.8-3.2 4.2-3.8z" fill="#cfcfcf"/>
<path d="M23.2 219.1v-2.6l-2.6 2.6z" fill="#d8d8d8"/>
<path d="M11.8 228.4a1.9 2.2 0 1 1 2.8 0c-0.6 1-0.4 2.4 0.2 3.2h3v2.4h-9.2v-2.4h3c0.6-0.8 0.8-2.2 0.2-3.2z" fill="#cfcfcf"/><rect x="8.4" y="235" width="9.6" height="1.6" fill="#cfcfcf"/>
<path d="M23.2 238.3v-2.6l-2.6 2.6z" fill="#d8d8d8"/>
<path d="M19.8 244.4l0.8 0.8-6.4 7-1.4-1.4z" fill="#cfcfcf"/><path d="M12.2 251.2l1.6 1.6c-0.6 1.8-2.8 2.2-5 1.8 1.6-0.6 1.4-2.8 3.4-3.4z" fill="#cfcfcf"/><path d="M8.4 248.4a4 4 0 0 1 6.4-3.2" fill="none" stroke="#cfcfcf" stroke-width="1"/><path d="M8.2 245.4l0.2 3.4 3-1.2z" fill="#cfcfcf"/>
<path d="M23.2 256.9v-2.6l-2.6 2.6z" fill="#d8d8d8"/>
<path d="M12.6 263.4h7.4l-4.4 6h-7.4z" fill="#cfcfcf"/><path d="M8.2 269.8h7.4v3.6h-7.4zM15.6 269.8l4.4-6.4v3.4l-4.4 6.6z" fill="#9c9c9c"/>
<path d="M23.2 276.3v-2.6l-2.6 2.6z" fill="#d8d8d8"/>
<rect x="8.300" y="284.200" width="11.200" height="8.200" fill="url(#gr)" stroke="#cfcfcf" stroke-width="1"/>
<path d="M23.2 295.2v-2.6l-2.6 2.6z" fill="#d8d8d8"/>
<path d="M13.6 301.6c1.6 3 4.2 5 4.2 7.4a4.2 4 0 0 1-8.4 0c0-2.4 2.6-4.4 4.2-7.4z" fill="#cfcfcf"/>
<path d="M23.2 314.7v-2.6l-2.6 2.6z" fill="#d8d8d8"/>
<ellipse cx="13" cy="325.600" rx="6" ry="5.200" fill="#cfcfcf"/><path d="M15 323l5.200 3.800 0.800 3.600-1.400 1.400-3.800-1.600z" fill="#cfcfcf"/><circle cx="11.400" cy="326.200" r="1.700" fill="#3d3d3d"/>
<path d="M23.2 333.6v-2.6l-2.6 2.6z" fill="#d8d8d8"/>
<path d="M3.6 336.8h21.4" stroke="#3c3c3c" stroke-width="1"/><path d="M3.6 337.7h21.4" stroke="#606060" stroke-width="0.6"/>
<path d="M8.600 352.900l2.100-7.300 3.900-2.900 3.900 3.900-2.900 3.900z" fill="#cfcfcf"/><path d="M15.300 341.300l4.600 4.600-1.300 1.300-4.600-4.600z" fill="#cfcfcf"/><circle cx="14" cy="347.500" r="1" fill="#535353"/><path d="M9 352.500l4.400-4.400" stroke="#535353" stroke-width="0.700"/>
<path d="M23.2 355v-2.6l-2.6 2.6z" fill="#d8d8d8"/>
<text x="9.20" y="371.10" font-size="14.8" fill="#cfcfcf" textLength="9.40" lengthAdjust="spacingAndGlyphs" style='font-family:"Liberation Serif",serif' >T</text>
<path d="M23.2 373.7v-2.6l-2.6 2.6z" fill="#d8d8d8"/>
<path d="M10 379l0 11 2.600-2.400 1.800 4.200 1.800-0.800-1.800-4 3.400-0.200z" fill="#2a2a2a" stroke="#cfcfcf" stroke-width="0.900"/>
<path d="M23.2 392.9v-2.6l-2.6 2.6z" fill="#d8d8d8"/>
<rect x="8.800" y="400.200" width="10.400" height="8.600" fill="#9a9a9a" stroke="#cfcfcf" stroke-width="1"/>
<path d="M23.2 412v-2.6l-2.6 2.6z" fill="#d8d8d8"/>
<path d="M3.600 414.800h21.400" stroke="#3c3c3c" stroke-width="1"/>
<rect x="208.00" y="182.00" width="366.20" height="220.20" fill="#0c0c0c" />
<rect x="206.90" y="181.00" width="366.30" height="220.30" fill="#ffffff" />
<g clip-path="url(#cwhite)">
<path d="M213 226L213 345.6Q214.6 349.59999999999997 223.7 350.2Q232.1 350.2 232.5 348.6L232.5 226z" fill="#5f5623"/>
<path d="M455.6 250L455.6 310.6Q457.2 315.0 466.4 315.6Q474.8 315.6 475.2 313.4L475.2 250z" fill="#5f5623"/>
<path d="M543 236L543 352.6Q544.6 360.59999999999997 554.1 361.2Q562.8 361.2 563.2 359.4L563.2 236z" fill="#5f5623"/>
<path d="M279.6 274L279.6 393.6Q281.4 401.0 292.0 401.6Q301.7 401.6 302.2 399L302.2 274z" fill="#5f5623"/>
<path d="M207.5 221L288 272.2L287.5 282L207.5 228.6z" fill="#776c2f"/>
<path d="M288 272.2L569.4 230.6L570 238.6L287.5 282z" fill="#7c712e"/>
<path d="M207.5 228.6L287.5 282L570 238.6" fill="none" stroke="#cfc98a" stroke-width="0.6" opacity="0.8"/>
<path d="M207.5 221.4L468 181.6L569.4 230.6L288 272.2z" fill="#6f652b"/>
<path d="M207.5 221L288 272.2L569.4 230.6" fill="none" stroke="#5d5424" stroke-width="0.8"/>
<path d="M208.3 222.4L288 273.4L569.6 231.8" fill="none" stroke="#8c8140" stroke-width="0.7"/>
<rect x="283.8" y="205.4" width="5.4" height="58.4" fill="#e7e7e7"/>
<path d="M347 225.200C351 222 356 221.400 359.500 223.400C363.600 226 363.200 233 360.600 239C357.600 246 354 252 350 254.600C347.500 256 345 255.600 343 253" fill="none" stroke="#f4f4f4" stroke-width="3.300" stroke-linecap="round"/>
<path d="M286 236L304 245.600" stroke="#f6f6f6" stroke-width="4.200" stroke-linecap="round"/>
<ellipse cx="285.400" cy="234.600" rx="4.800" ry="5.200" fill="#fafafa"/>
<path d="M300 218.600C300.600 233 304.500 252 310.500 263.800L338.500 263.800C344 252 347.400 233 348 218.600z" fill="url(#cup)"/>
<ellipse cx="324" cy="218.600" rx="24" ry="5.400" fill="#f7f7f7"/>
<ellipse cx="324" cy="219" rx="22.600" ry="4.600" fill="url(#cupin)"/>
<path d="M311 263.900h27" stroke="#3a3326" stroke-width="1"/>
<g fill="none" stroke="#1c1c1c" stroke-width="1.100" stroke-linecap="round"><path d="M310.400 237.200c2.400-1.600 5.600-2.400 8.800-2.600M326.200 234.600c3.200 0 6.600 0.600 9.400 2.200"/><path d="M314.700 253.100c3.600 5.800 14.600 6.600 19.300 0" stroke-width="0.900"/><path d="M314.400 242.200c0.800-1.200 2.400-1.600 3.800-1M329 241.200c1.400-0.600 3-0.200 3.800 1" stroke-width="0.800"/></g>
<ellipse cx="316.900" cy="245.600" rx="1.900" ry="2.600" fill="#111"/><ellipse cx="331" cy="245.600" rx="1.900" ry="2.600" fill="#111"/>
<circle cx="316.400" cy="244.800" r="0.550" fill="#fff"/><circle cx="330.500" cy="244.800" r="0.550" fill="#fff"/>
<path d="M324.600 257.700l5.800-0.700c0.200 1.800-0.400 3.800-1.400 4.800-2-0.600-3.600-2.200-4.400-4.100z" fill="#e8141c"/>
</g>
<rect x="279.900" y="204.200" width="83.600" height="59.700" fill="none" stroke="#7d84a4" stroke-width="1"/>
<rect x="277.6" y="201.9" width="4.600" height="4.600" fill="#ffffff" fill-opacity="0.180" stroke="#7d84a4" stroke-width="1.100"/>
<rect x="319.4" y="201.9" width="4.600" height="4.600" fill="#ffffff" fill-opacity="0.180" stroke="#7d84a4" stroke-width="1.100"/>
<rect x="361.2" y="201.9" width="4.600" height="4.600" fill="#ffffff" fill-opacity="0.180" stroke="#7d84a4" stroke-width="1.100"/>
<rect x="277.6" y="232.3" width="4.600" height="4.600" fill="#ffffff" fill-opacity="0.180" stroke="#7d84a4" stroke-width="1.100"/>
<rect x="361.2" y="232.3" width="4.600" height="4.600" fill="#ffffff" fill-opacity="0.180" stroke="#7d84a4" stroke-width="1.100"/>
<rect x="277.6" y="261.6" width="4.600" height="4.600" fill="#ffffff" fill-opacity="0.180" stroke="#7d84a4" stroke-width="1.100"/>
<rect x="319.4" y="261.6" width="4.600" height="4.600" fill="#ffffff" fill-opacity="0.180" stroke="#7d84a4" stroke-width="1.100"/>
<rect x="361.2" y="261.6" width="4.600" height="4.600" fill="#ffffff" fill-opacity="0.180" stroke="#7d84a4" stroke-width="1.100"/>
<rect x="277.300" y="201.600" width="5.200" height="5.200" fill="#e8e8e8" stroke="#2a2a2a" stroke-width="1.300"/><path d="M278.600 205h2.600" stroke="#444" stroke-width="0.800"/>
<circle cx="322.500" cy="235" r="2" fill="#f4f4f4" stroke="#444" stroke-width="0.800"/><path d="M322.500 231.200v7.600M318.700 235h7.600" stroke="#444" stroke-width="0.700"/>
<rect x="149.700" y="146.400" width="334.500" height="166.700" fill="none" stroke="#ee363b" stroke-width="2.500"/>
<path d="M733.20 46.90L734.78 59.78L735.45 56.09L876.69 280.91L877.37 280.49L740.39 53.05L743.98 54.12z" fill="#f0353b"/>
<path d="M302.30 324.00L308.65 336.17L307.74 331.73L441.82 429.64L442.30 429.00L311.23 327.10L315.75 326.75z" fill="#f0353b"/>
</svg></body></html>
